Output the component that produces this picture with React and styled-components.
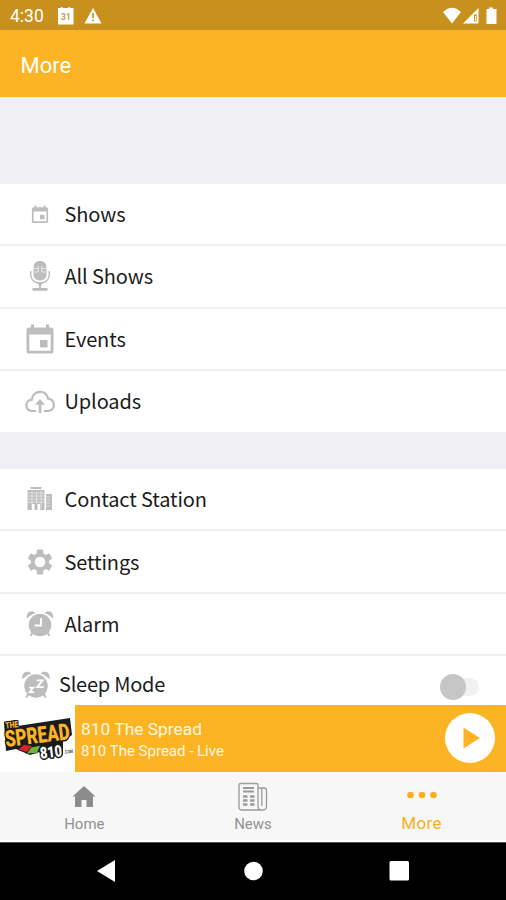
import React, { useState } from 'react';
import styled, { createGlobalStyle } from 'styled-components';

const GlobalStyle = createGlobalStyle`
  * {
    box-sizing: border-box;
  }

  body {
    margin: 0;
    background: #fff;
    font-family: Roboto, sans-serif;
  }
`;

const Screen = styled.div`
  width: 506px;
  height: 900px;
  display: flex;
  flex-direction: column;
  overflow: hidden;
  background: #efeff4;
`;

const StatusBar = styled.div`
  height: 30px;
  flex: none;
  display: flex;
  align-items: center;
  padding: 1px 8px 0 10px;
  background: #c8911d;
  color: #fff;
`;

const Clock = styled.span`
  width: 47px;
  font-size: 17.5px;
  line-height: 30px;
`;

const Spacer = styled.div`
  flex: 1;
`;

const Header = styled.header`
  height: 67px;
  flex: none;
  padding: 1px 20.5px 0;
  background: #fcb424;
  color: #fff;
  font-size: 22px;
  line-height: 69px;
`;

const Gap = styled.div`
  height: ${props => props.$height}px;
  flex: none;
  background: #efeff4;
`;

const Icon = styled.svg`
  display: block;
  flex: none;
  overflow: visible;
`;

const Row = styled.div`
  height: ${props => props.$height || 62.4}px;
  flex: none;
  display: flex;
  align-items: center;
  padding-left: ${props => (props.$tight ? 21 : 24.5)}px;
  padding-right: 27px;
  background: #fff;
  border-bottom: ${props => (props.$last ? 0 : 2)}px solid #f0f0f2;
`;

const RowLabel = styled.span`
  padding-left: ${props => (props.$tight ? 8 : 10)}px;
  padding-top: ${props => (props.$tight ? 6 : 0)}px;
  color: #1c1c1c;
  font-family: 'Noto Sans CJK SC', 'Noto Sans', sans-serif;
  font-size: 20px;
  line-height: 30px;
  letter-spacing: ${props => (props.$tight ? -0.25 : -0.12)}px;
  white-space: nowrap;
`;

const Toggle = styled.button`
  width: 27px;
  height: 18px;
  margin-left: auto;
  margin-top: 12px;
  padding: 0;
  display: flex;
  align-items: center;
  border: 0;
  background: #f1f1f1;
  border-radius: 9px;
`;

const Knob = styled.span`
  width: 26px;
  height: 26px;
  flex: none;
  margin-left: ${props => (props.$on ? 1 : -12)}px;
  border-radius: 50%;
  background: #c6c6c6;
`;

const Player = styled.div`
  height: 67px;
  flex: none;
  display: flex;
  align-items: center;
  padding-right: 11px;
  background: #fcb424;
`;

const Cover = styled.div`
  width: 75px;
  height: 67px;
  flex: none;
  background: #fff;
`;

const Track = styled.div`
  flex: 1;
  padding: 3px 0 0 6px;
  color: #fff8e3;
`;

const TrackTitle = styled.div`
  font-size: 17.3px;
  line-height: 22px;
  letter-spacing: 0.05px;
`;

const TrackInfo = styled.div`
  font-size: 15px;
  line-height: 22px;
`;

const PlayButton = styled.button`
  width: 50px;
  height: 50px;
  padding: 0;
  display: flex;
  align-items: center;
  justify-content: center;
  border: 0;
  border-radius: 50%;
  background: #fff;
`;

const TabBar = styled.nav`
  height: 70px;
  flex: none;
  display: grid;
  grid-template-columns: repeat(3, 1fr);
  background: #f7f7f7;
  border-bottom: 2px solid #fff;
`;

const Tab = styled.a`
  display: flex;
  flex-direction: column;
  align-items: center;
  padding-top: 10px;
  color: ${props => (props.$active ? '#fcae20' : '#929292')};
  font-size: ${props => (props.$active ? 17 : 15)}px;
  line-height: 22px;
  letter-spacing: ${props => (props.$active ? 0.4 : 0)}px;
`;

const NavBar = styled.div`
  height: 58px;
  flex: none;
  display: flex;
  align-items: center;
  justify-content: space-between;
  padding: 0 96px;
  background: #000;
  border-top: 1px solid #555;
`;

const GREY = '#bdbdbd';

const CalendarIcon = ({ size }) => (
  <Icon width="30" height="30" viewBox="0 0 30 30">
    <g transform={`translate(15 15.500) scale(${size}) translate(-15 -15)`}>
      <path
        fill={GREY}
        fillRule="evenodd"
        d="M6 0h3v3h12V0h3v3h2q2.500 0 2.500 2.500v21Q28.500 29 26 29H4q-2.500 0-2.500-2.500v-21Q1.500 3 4 3h2zM4.300 10v16.200h21.400V10z"
      />
      <path fill={GREY} d="M15 15.500h7.500v7.500H15z" />
    </g>
  </Icon>
);

const MicIcon = () => (
  <Icon width="30" height="30" viewBox="0 0 30 30">
    <path fill={GREY} d="M15 0c4 0 6.500 2.500 6.500 6.500v6.500c0 4-2.500 6.500-6.500 6.500S8.500 17 8.500 13V6.500C8.500 2.500 11 0 15 0z" />
    <path stroke="#fff" strokeWidth="1.200" d="M8.500 7.500h5.200M16.300 7.500h5.200M8.500 11h5.200M16.300 11h5.200M13.300 5v6M16.700 5v6" opacity=".6" />
    <path fill="none" stroke={GREY} strokeWidth="1.400" d="M5.700 10v3.500c0 5 3.800 8.500 9.300 8.500s9.300-3.500 9.300-8.500V10" />
    <path fill={GREY} d="M12 22h6l-2 2.500V27h6.500v2.800h-15V27H14v-2.500z" />
  </Icon>
);

const UploadIcon = () => (
  <Icon width="30" height="30" viewBox="0 0 30 30">
    <path
      fill="none"
      stroke={GREY}
      strokeWidth="2.200"
      d="M11 25H7.500C3.500 25 1.300 22.500 1.300 19.300c0-3 2.200-5.500 5.500-5.700C7.200 9 10.700 5.800 15 5.800s7.300 2.900 8.100 6.800c3.600.200 5.700 2.900 5.700 6.200 0 3.700-2.400 6.200-6 6.200H19"
    />
    <path fill={GREY} d="M15 13l5 5.700h-3.700V27h-2.600v-8.300H10z" />
  </Icon>
);

const BuildingIcon = () => (
  <Icon width="30" height="30" viewBox="0 0 30 30">
    <path fill={GREY} d="M5.500 3h11v2h-11zM2.500 6h17v20h-4.500v-6h-8v6H2.500zM21 10h6v16h-6z" />
    <path
      stroke="#fff"
      strokeWidth=".9"
      d="M3 9h17M3 12h17M3 15h17M3 18h17M7 7v18M11.500 7v13M16 7v18M21 13h4M21 16h4M21 19h4M21 22h4"
      opacity=".6"
    />
    <path fill={GREY} d="M9.500 19h3v7h-3z" />
  </Icon>
);

const GearIcon = () => (
  <Icon width="30" height="30" viewBox="0 0 30 30">
    <g fill={GREY}>
      {[0, 60, 120].map(angle => (
        <rect key={angle} x="11.800" y="2.600" width="6.400" height="24.800" rx="1.200" transform={`rotate(${angle} 15 15)`} />
      ))}
      <circle cx="15" cy="15" r="9.300" />
    </g>
    <circle cx="15" cy="15" r="5.300" fill="#fff" />
  </Icon>
);

const AlarmBody = () => (
  <g fill={GREY}>
    <circle cx="15" cy="16" r="11.300" />
    <path d="M2 9.500C1.300 5.500 3 2.300 6.500 2.300c1.700 0 3 .5 4 1.600C7.500 5 4.500 7 2 9.500zM28 9.500c.700-4-1-7.200-4.500-7.200-1.700 0-3 .5-4 1.600 3 1.100 6 3.100 8.500 5.600z" />
    <path d="M6.500 23l2 1.800L6 27.500l-1.200-.7zM23.500 23l-2 1.800 2.500 2.700 1.200-.7z" />
  </g>
);

const AlarmIcon = () => (
  <Icon width="30" height="30" viewBox="0 0 30 30">
    <AlarmBody />
    <path fill="none" stroke="#fff" strokeWidth="1.900" d="M16 9v7.500H9.500" />
  </Icon>
);

const SleepIcon = () => (
  <Icon width="30" height="30" viewBox="0 0 30 30">
    <g transform="translate(15 19) scale(1.040) translate(-15 -15)">
      <AlarmBody />
      <path fill="none" stroke="#fff" strokeWidth="1.700" d="M15.500 10.500h6L16 17h6.500M8.500 17.500h3.800L9 21.800h4.300" />
    </g>
  </Icon>
);

const Logo = () => (
  <Icon width="75" height="67" viewBox="0 0 75 67">
    <path fill="#191b1d" d="M4 17l12-2 1.500 6L70 13l2 17-9 6v14l-20 4-4-7-9 3-14-6-10 2z" />
    <g
      fontFamily="Roboto, sans-serif"
      fontWeight="900"
      paintOrder="stroke"
      strokeLinejoin="round"
      transform="rotate(-7 38 32)"
    >
      <text x="7" y="20" fontSize="9" fill="#fcb424" stroke="#191b1d" strokeWidth="2" textLength="13" lengthAdjust="spacingAndGlyphs">THE</text>
      <text x="5" y="38" fontSize="23" fill="#fcb424" stroke="#191b1d" strokeWidth="3" textLength="65" lengthAdjust="spacingAndGlyphs">SPREAD</text>
      <path fill="#d9232e" stroke="#191b1d" strokeWidth="1" d="M17 42l6-4 8 2.500-6 5z" />
      <path fill="#6cb43c" stroke="#191b1d" strokeWidth="1" d="M25 47l5-5.500 9-.5-4 6.500z" />
      <text x="38" y="54" fontSize="16" fill="#fff" stroke="#191b1d" strokeWidth="3" textLength="22" lengthAdjust="spacingAndGlyphs">810</text>
      <text x="62" y="52" fontSize="5" fill="#666" textLength="9" lengthAdjust="spacingAndGlyphs">.COM</text>
    </g>
  </Icon>
);

const mainItems = [
  { label: 'Shows', icon: <CalendarIcon size={0.6} /> },
  { label: 'All Shows', icon: <MicIcon /> },
  { label: 'Events', icon: <CalendarIcon size={1} /> },
  { label: 'Uploads', icon: <UploadIcon />, height: 60.8 },
];

const settingItems = [
  { label: 'Contact Station', icon: <BuildingIcon /> },
  { label: 'Settings', icon: <GearIcon /> },
  { label: 'Alarm', icon: <AlarmIcon /> },
];

const App = () => {
  const [sleep, setSleep] = useState(false);

  return (
    <>
      <GlobalStyle />
      <Screen>
        <StatusBar>
          <Clock>4:30</Clock>
          <Icon width="46" height="18" viewBox="0 0 46 18">
            <path fill="#fff" d="M1 1h3V0h1.500v1h6V0H13v1h3.500v16.500H1z" />
            <text x="8.800" y="13" fontSize="9" fontWeight="700" fill="#c8a14c" textAnchor="middle">31</text>
            <path fill="#fff" d="M36 1l8.500 15.500h-17z" />
            <path fill="#c8911d" d="M35.200 6h1.700v5h-1.700zM35.200 12.500h1.700v1.700h-1.700z" />
          </Icon>
          <Spacer />
          <Icon width="55" height="18" viewBox="0 0 55 18">
            <path fill="#fff" d="M0 5Q9-3.500 18 5L9 16.500z" />
            <path fill="#fff" d="M35.500 1v15.500H20z" />
            <path fill="#c8911d" d="M31 7.500h2.700v7H31z" />
            <path fill="#fff" d="M32 9h.9v5H32zM46 .5h4V2h3.500v15h-10V2H46z" />
          </Icon>
        </StatusBar>
        <Header>More</Header>

        <Gap $height={86.800} />
        {mainItems.map((item, i) => (
          <Row key={item.label} $height={item.height} $last={i === mainItems.length - 1}>
            {item.icon}
            <RowLabel>{item.label}</RowLabel>
          </Row>
        ))}

        <Gap $height={37.200} />
        {settingItems.map(item => (
          <Row key={item.label}>
            {item.icon}
            <RowLabel>{item.label}</RowLabel>
          </Row>
        ))}
        <Row $height={48.800} $tight $last>
          <SleepIcon />
          <RowLabel $tight>Sleep Mode</RowLabel>
          <Toggle onClick={() => setSleep(!sleep)}>
            <Knob $on={sleep} />
          </Toggle>
        </Row>

        <Player>
          <Cover>
            <Logo />
          </Cover>
          <Track>
            <TrackTitle>810 The Spread</TrackTitle>
            <TrackInfo>810 The Spread - Live</TrackInfo>
          </Track>
          <PlayButton>
            <Icon width="50" height="50" viewBox="0 0 50 50">
              <path fill="#fcb424" d="M18.500 14.500v21L35 25z" />
            </Icon>
          </PlayButton>
        </Player>

        <TabBar>
          <Tab>
            <Icon width="30" height="31" viewBox="0 0 30 31">
              <path fill="#8c8c8c" d="M15 4l11.500 10.500H24V25h-6.500v-7h-5v7H6V14.500H3.500z" />
            </Icon>
            Home
          </Tab>
          <Tab>
            <Icon width="30" height="31" viewBox="0 0 30 31">
              <g fill="none" stroke="#9a9a9a" strokeWidth="1.300">
                <path d="M25.500 28H4q-3 0-3-3V3q0-1.500 1.500-1.500h16Q20 1.500 20 3v21.500q0 3.500 4.200 3.500 4.300 0 4.300-3.500V8q0-2-2-2H20M23.800 6v18" />
                <path strokeWidth="1.800" d="M5 6h11M5 9.500h11" />
                <path strokeWidth="2.600" d="M5 14.500h4.500M12 14.500h4.500M5 18.500h4.500M12 18.500h4.500M5 22.500h4.500M12 22.500h4.500" />
              </g>
            </Icon>
            News
          </Tab>
          <Tab $active>
            <Icon width="30" height="30" viewBox="0 0 30 30" fill="#fcae20">
              <circle cx="3.500" cy="13" r="3.300" />
              <circle cx="15" cy="13" r="3.300" />
              <circle cx="26.500" cy="13" r="3.300" />
            </Icon>
            More
          </Tab>
        </TabBar>

        <NavBar>
          <Icon width="20" height="22" viewBox="0 0 20 22">
            <path fill="#fff" d="M19 0v22L1 11z" />
          </Icon>
          <Icon width="20" height="20" viewBox="0 0 20 20">
            <circle cx="10.500" cy="10" r="9.300" fill="#fff" />
          </Icon>
          <Icon width="20" height="20" viewBox="0 0 20 20">
            <rect x="-.5" y="0" width="19.500" height="19.500" rx="1.500" fill="#fff" />
          </Icon>
        </NavBar>
      </Screen>
    </>
  );
};

export default App;
